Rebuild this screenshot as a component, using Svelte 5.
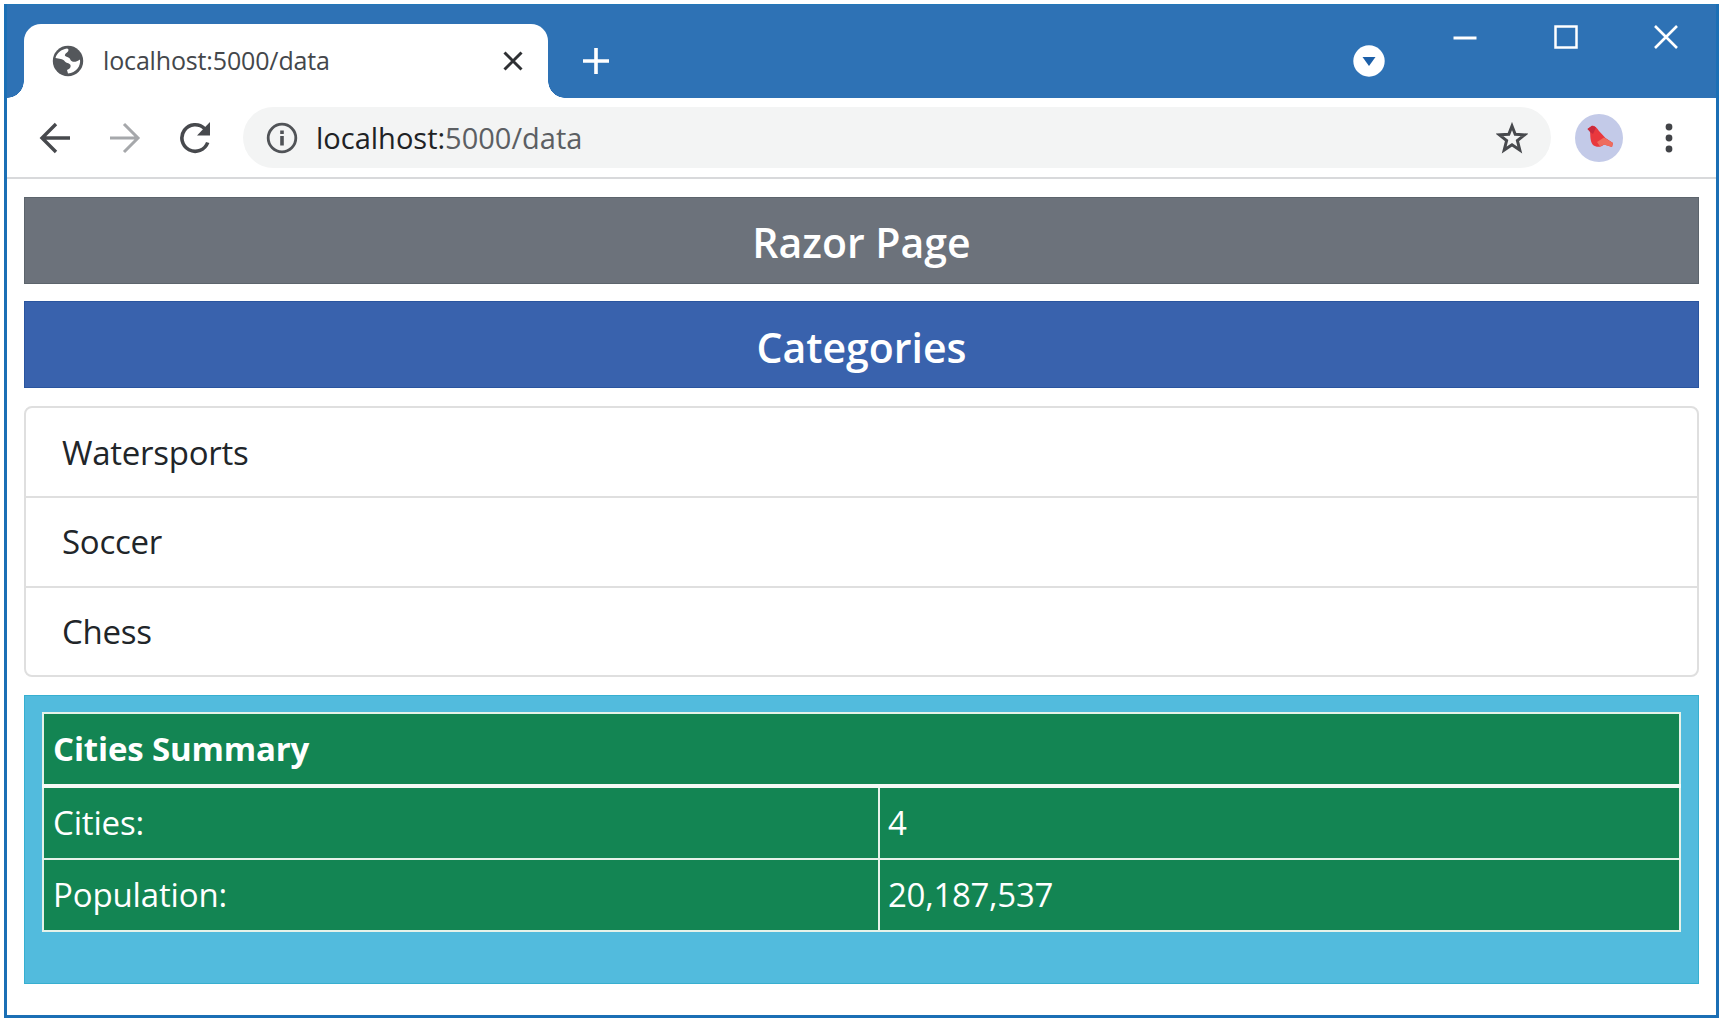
<script>
  const categories = ['Watersports', 'Soccer', 'Chess'];
  const summary = [
    { label: 'Cities:', value: '4' },
    { label: 'Population:', value: '20,187,537' }
  ];
</script>

<div class="window">
  <header class="titlebar">
    <div class="tab">
      <svg class="globe" width="32" height="32" viewBox="0 0 32 32">
        <circle cx="16" cy="16" r="15.2" fill="#54575b" />
        <path d="M3.500 13C5 8 9 4.500 15 3.600C17 4 17 6 15 7.500C13 9 12 10.500 14 11.500C17 12.500 18 13 18.500 15C20 17.500 24 17.500 28 14.500C29 21 24 28 16 28.500L15 25C18 24 19 22 18.500 20C17 17.500 14 18.500 12.500 16C11 14 7 13.500 3.500 13Z" fill="#fff" />
      </svg>
      <span class="tab-title">localhost:5000/data</span>
      <svg width="20" height="20" viewBox="0 0 20 20"><path d="M1.500 1.500L18.500 18.500M18.500 1.500L1.500 18.500" stroke="#2e3033" stroke-width="3" /></svg>
    </div>
    <svg class="new-tab" width="28" height="28" viewBox="0 0 28 28"><path d="M14 1V27M1 14H27" stroke="#fff" stroke-width="3.600" /></svg>
    <div class="controls">
      <svg class="chevron" width="32" height="32" viewBox="0 0 32 32"><circle cx="16" cy="16" r="15.700" fill="#fff" /><path d="M9.500 12H22.500L16 21Z" fill="#1c5fa8" /></svg>
      <svg class="minimise" width="24" height="24" viewBox="0 0 24 24"><path d="M.500 13H23.500" stroke="#fff" stroke-width="3" /></svg>
      <svg class="maximise" width="24" height="24" viewBox="0 0 24 24"><rect x="1.500" y="1.500" width="21" height="21" fill="none" stroke="#fff" stroke-width="2.500" /></svg>
      <svg width="24" height="24" viewBox="0 0 24 24"><path d="M1 1L23 23M23 1L1 23" stroke="#fff" stroke-width="2.600" /></svg>
    </div>
  </header>

  <nav class="toolbar">
    <svg width="32" height="32" viewBox="0 0 32 32"><path d="M17 2L3 16L17 30M3 16H31" fill="none" stroke="#47494d" stroke-width="3.400" /></svg>
    <svg width="32" height="32" viewBox="0 0 32 32"><path d="M15 2L29 16L15 30M29 16H1" fill="none" stroke="#a6a8ab" stroke-width="3" /></svg>
    <svg width="32" height="32" viewBox="0 0 32 32"><path d="M28.700 20.500A13.300 13.300 0 1 1 25.500 6.500L28 9" fill="none" stroke="#47494d" stroke-width="3.600" /><path d="M31 0V13.500H18Z" fill="#47494d" /></svg>
    <div class="address">
      <svg width="32" height="32" viewBox="0 0 32 32"><circle cx="16" cy="16" r="13.800" fill="none" stroke="#505357" stroke-width="2.800" /><path d="M16 14V23.500M16 8.500V12" stroke="#505357" stroke-width="3.600" /></svg>
      <span class="url"><b>localhost:</b>5000/data</span>
      <svg class="star" width="32" height="32" viewBox="0 0 32 32"><path d="M16 4L19.200 12.200L28.500 12.800L21.400 18.600L23.800 28L16 22.800L8.200 28L10.600 18.600L3.500 12.800L12.800 12.200Z" fill="none" stroke="#47494d" stroke-width="3" /></svg>
    </div>
    <svg class="avatar" width="48" height="48" viewBox="0 0 48 48">
      <circle cx="24" cy="24" r="24" fill="#c3cae8" />
      <path d="M12.500 15L17 11.800C20 11.500 21.500 13.500 24 17L30.500 24L38 29L37 33L29 30.500C26 33.500 21 33.500 18 31C15 27.500 15.500 22 15 17Z" fill="#e9383d" />
      <path d="M22 28L29 23.500L38 29L37 33L29 30.500L25 32.500Z" fill="#ee6d5d" />
      <path d="M12.500 15L17 11.800L21 13.500L18 20L15 18Z" fill="#c92a3c" />
    </svg>
    <svg class="menu" width="8" height="32" viewBox="0 0 8 32"><g fill="#424448"><circle cx="4" cy="5" r="3.400" /><circle cx="4" cy="16" r="3.400" /><circle cx="4" cy="27" r="3.400" /></g></svg>
  </nav>

  <main>
    <h4 class="grey">Razor Page</h4>
    <h4 class="blue">Categories</h4>
    <ul>
      {#each categories as category}
        <li>{category}</li>
      {/each}
    </ul>
    <section class="info">
      <table>
        <colgroup><col class="label-col" /><col /></colgroup>
        <thead><tr><th colspan="2">Cities Summary</th></tr></thead>
        <tbody>
          {#each summary as row}
            <tr><td>{row.label}</td><td>{row.value}</td></tr>
          {/each}
        </tbody>
      </table>
    </section>
  </main>
</div>

<style>
  :global(body) {
    background: #fff;
    overflow: hidden;
  }
  .window {
    box-sizing: border-box;
    width: 1715px;
    height: 1014px;
    margin: 4px 0 0 4px;
    border: 3px solid #1b6fb5;
    border-top: 0;
    background: #fff;
    font-family: 'Open Sans', 'Noto Sans', sans-serif;
    color: #212529;
  }
  svg {
    display: block;
    flex: none;
  }
  .titlebar {
    display: flex;
    height: 94px;
    box-sizing: border-box;
    padding: 19px 38px 0 17px;
    background: #2e72b5;
    border-top: 1px solid #2377b8;
  }
  .tab {
    position: relative;
    display: flex;
    align-items: center;
    box-sizing: border-box;
    width: 524px;
    height: 74px;
    padding: 0 25px 0 28px;
    border-radius: 17px 17px 0 0;
    background: #fff;
  }
  /* Concave feet joining the tab to the toolbar */
  .tab::before,
  .tab::after {
    content: '';
    position: absolute;
    bottom: 0;
    width: 17px;
    height: 17px;
  }
  .tab::before {
    left: -17px;
    background: radial-gradient(circle at 0 0, transparent 16.500px, #fff 17px);
  }
  .tab::after {
    right: -17px;
    background: radial-gradient(circle at 100% 0, transparent 16.500px, #fff 17px);
  }
  .tab-title {
    flex: 1;
    margin-left: 19px;
    padding-bottom: 2px;
    font-size: 25px;
    line-height: 34px;
    letter-spacing: -0.15px;
    color: #44474b;
  }
  .new-tab {
    margin: 23px 0 0 34px;
  }
  .controls {
    display: flex;
    margin-left: auto;
    padding-top: 1px;
  }
  .chevron {
    margin: 20px 68px 0 0;
  }
  .minimise {
    margin-right: 77px;
  }
  .maximise {
    margin-right: 76px;
  }
  .toolbar {
    display: flex;
    align-items: center;
    box-sizing: border-box;
    height: 81px;
    padding: 0 43px 0 32px;
    border-bottom: 2px solid #d8d9db;
    gap: 38px;
  }
  .address {
    display: flex;
    align-items: center;
    flex: 1;
    box-sizing: border-box;
    height: 61px;
    margin-left: -6px;
    padding: 0 23px 0 23px;
    border-radius: 31px;
    background: #f3f4f4;
  }
  .url {
    margin-left: 18px;
    font-size: 29px;
    line-height: 40px;
    color: #5c5f63;
  }
  .url b {
    font-weight: 400;
    color: #202225;
  }
  .star {
    margin-left: auto;
  }
  .avatar {
    margin-left: -14px;
  }
  .menu {
    margin-left: 4px;
  }
  main {
    padding: 18px 17px 0 17px;
  }
  h4 {
    box-sizing: border-box;
    height: 87px;
    margin: 0;
    padding-top: 2px;
    font-size: 41px;
    line-height: 86px;
    font-weight: 600;
    text-align: center;
    color: #fff;
  }
  .grey {
    margin-bottom: 17px;
    background: #6c727b;
    box-shadow: inset 0 0 0 1px #5c646c;
  }
  .blue {
    margin-bottom: 18px;
    padding-top: 3px;
    background: #3962ad;
    box-shadow: inset 0 0 0 1px #2a559f;
  }
  ul {
    margin: 0 0 18px;
    padding: 0;
    list-style: none;
    border: 2px solid #dfdfdf;
    border-radius: 8px;
  }
  li {
    box-sizing: border-box;
    height: 88px;
    padding-left: 36px;
    font-size: 33px;
    line-height: 89px;
    letter-spacing: -0.25px;
  }
  li + li {
    height: 90px;
    line-height: 88px;
    border-top: 2px solid #dfdfdf;
  }
  li:last-child {
    height: 89px;
  }
  .info {
    box-sizing: border-box;
    height: 289px;
    padding: 17px 18px;
    background: #52bbdd;
    box-shadow: inset 0 0 0 1px #37afd0;
  }
  table {
    width: 100%;
    border-collapse: collapse;
    table-layout: fixed;
    background: #138553;
    color: #fff;
    font-size: 33px;
    line-height: 70px;
  }
  .label-col {
    width: 836px;
  }
  th,
  td {
    height: 70px;
    padding: 0 0 0 9px;
    border: 2px solid #e6f2e9;
    text-align: left;
    letter-spacing: -0.15px;
  }
  td + td {
    padding-left: 8px;
    letter-spacing: -0.3px;
  }
  th {
    font-weight: 700;
    border-bottom: 4px solid #f5faf6;
  }
</style>
